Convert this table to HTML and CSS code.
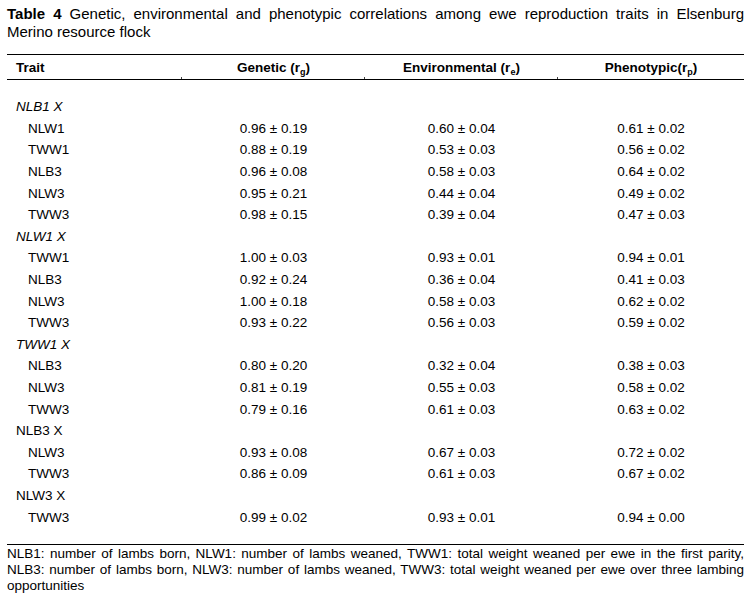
FILE: index.html
```html
<!DOCTYPE html>
<html lang="en">
<head>
<meta charset="utf-8">
<title>Table 4</title>
<link rel="stylesheet" href="styles.css">
</head>
<body>
<div class="page">
  <p class="caption"><b class="lbl">Table 4</b> Genetic, environmental and phenotypic correlations among ewe reproduction traits in Elsenburg Merino resource flock</p>
  <table class="tbl">
    <colgroup>
      <col class="c1"><col class="c2"><col class="c3"><col class="c4">
    </colgroup>
    <thead>
      <tr><th class="trait">Trait</th><th>Genetic (r<sub>g</sub>)</th><th>Environmental (r<sub>e</sub>)</th><th>Phenotypic(r<sub>p</sub>)</th></tr>
    </thead>
    <tbody>
      <tr class="first"><td class="grp it">NLB1 X</td><td></td><td></td><td></td></tr>
      <tr><td class="sub">NLW1</td><td>0.96 ± 0.19</td><td>0.60 ± 0.04</td><td>0.61 ± 0.02</td></tr>
      <tr><td class="sub">TWW1</td><td>0.88 ± 0.19</td><td>0.53 ± 0.03</td><td>0.56 ± 0.02</td></tr>
      <tr><td class="sub">NLB3</td><td>0.96 ± 0.08</td><td>0.58 ± 0.03</td><td>0.64 ± 0.02</td></tr>
      <tr><td class="sub">NLW3</td><td>0.95 ± 0.21</td><td>0.44 ± 0.04</td><td>0.49 ± 0.02</td></tr>
      <tr><td class="sub">TWW3</td><td>0.98 ± 0.15</td><td>0.39 ± 0.04</td><td>0.47 ± 0.03</td></tr>
      <tr><td class="grp it">NLW1 X</td><td></td><td></td><td></td></tr>
      <tr><td class="sub">TWW1</td><td>1.00 ± 0.03</td><td>0.93 ± 0.01</td><td>0.94 ± 0.01</td></tr>
      <tr><td class="sub">NLB3</td><td>0.92 ± 0.24</td><td>0.36 ± 0.04</td><td>0.41 ± 0.03</td></tr>
      <tr><td class="sub">NLW3</td><td>1.00 ± 0.18</td><td>0.58 ± 0.03</td><td>0.62 ± 0.02</td></tr>
      <tr><td class="sub">TWW3</td><td>0.93 ± 0.22</td><td>0.56 ± 0.03</td><td>0.59 ± 0.02</td></tr>
      <tr><td class="grp it">TWW1 X</td><td></td><td></td><td></td></tr>
      <tr><td class="sub">NLB3</td><td>0.80 ± 0.20</td><td>0.32 ± 0.04</td><td>0.38 ± 0.03</td></tr>
      <tr><td class="sub">NLW3</td><td>0.81 ± 0.19</td><td>0.55 ± 0.03</td><td>0.58 ± 0.02</td></tr>
      <tr><td class="sub">TWW3</td><td>0.79 ± 0.16</td><td>0.61 ± 0.03</td><td>0.63 ± 0.02</td></tr>
      <tr><td class="grp">NLB3 X</td><td></td><td></td><td></td></tr>
      <tr><td class="sub">NLW3</td><td>0.93 ± 0.08</td><td>0.67 ± 0.03</td><td>0.72 ± 0.02</td></tr>
      <tr><td class="sub">TWW3</td><td>0.86 ± 0.09</td><td>0.61 ± 0.03</td><td>0.67 ± 0.02</td></tr>
      <tr><td class="grp">NLW3 X</td><td></td><td></td><td></td></tr>
      <tr class="last"><td class="sub">TWW3</td><td>0.99 ± 0.02</td><td>0.93 ± 0.01</td><td>0.94 ± 0.00</td></tr>
    </tbody>
  </table>
  <p class="note">NLB1: number of lambs born, NLW1: number of lambs weaned, TWW1: total weight weaned per ewe in the first parity, NLB3: number of lambs born, NLW3: number of lambs weaned, TWW3: total weight weaned per ewe over three lambing opportunities</p>
</div>
</body>
</html>
```
FILE: styles.css
```css
html, body {
  margin: 0;
  padding: 0;
  background: #fff;
}

body {
  font-family: "Liberation Sans", Arial, sans-serif;
  color: #000;
}

.page {
  width: 737px;
  padding: 5px 0 0 7px;
}

.caption {
  margin: 0;
  font-size: 15px;
  line-height: 18px;
  text-align: justify;
}

.caption .lbl {
  font-weight: bold;
  white-space: nowrap;
}

.tbl {
  width: 737px;
  margin-top: 13px;
  border-collapse: collapse;
  font-size: 13.5px;
  table-layout: fixed;
}

.c1 { width: 175px; }
.c2 { width: 183px; }
.c3 { width: 193px; }
.c4 { width: 186px; }

.tbl thead th {
  position: relative;
  height: 24px;
  padding: 0;
  font-weight: bold;
  text-align: center;
  border-top: 1px solid #000;
  border-bottom: 1px solid #000;
  vertical-align: middle;
}

.tbl thead th.trait {
  text-align: left;
  padding-left: 9px;
}

.tbl thead th:not(:last-child)::after {
  content: "";
  position: absolute;
  right: 0;
  bottom: 0;
  width: 1px;
  height: 2px;
  background: #444;
}

sub {
  font-size: 9px;
  vertical-align: -3px;
  line-height: 0;
}

.tbl tbody td {
  height: 21.6px;
  padding: 0;
  text-align: center;
  vertical-align: middle;
  white-space: nowrap;
}

.tbl tbody tr.first td {
  padding-top: 16px;
}

.tbl tbody tr.last td {
  padding-bottom: 16px;
  border-bottom: 1px solid #000;
}

.tbl tbody td.grp {
  text-align: left;
  padding-left: 9px;
}

.tbl tbody td.it {
  font-style: italic;
}

.tbl tbody td.sub {
  text-align: left;
  padding-left: 21px;
}

.note {
  margin: 1px 0 0;
  font-size: 13.5px;
  line-height: 16px;
  text-align: justify;
}
```
